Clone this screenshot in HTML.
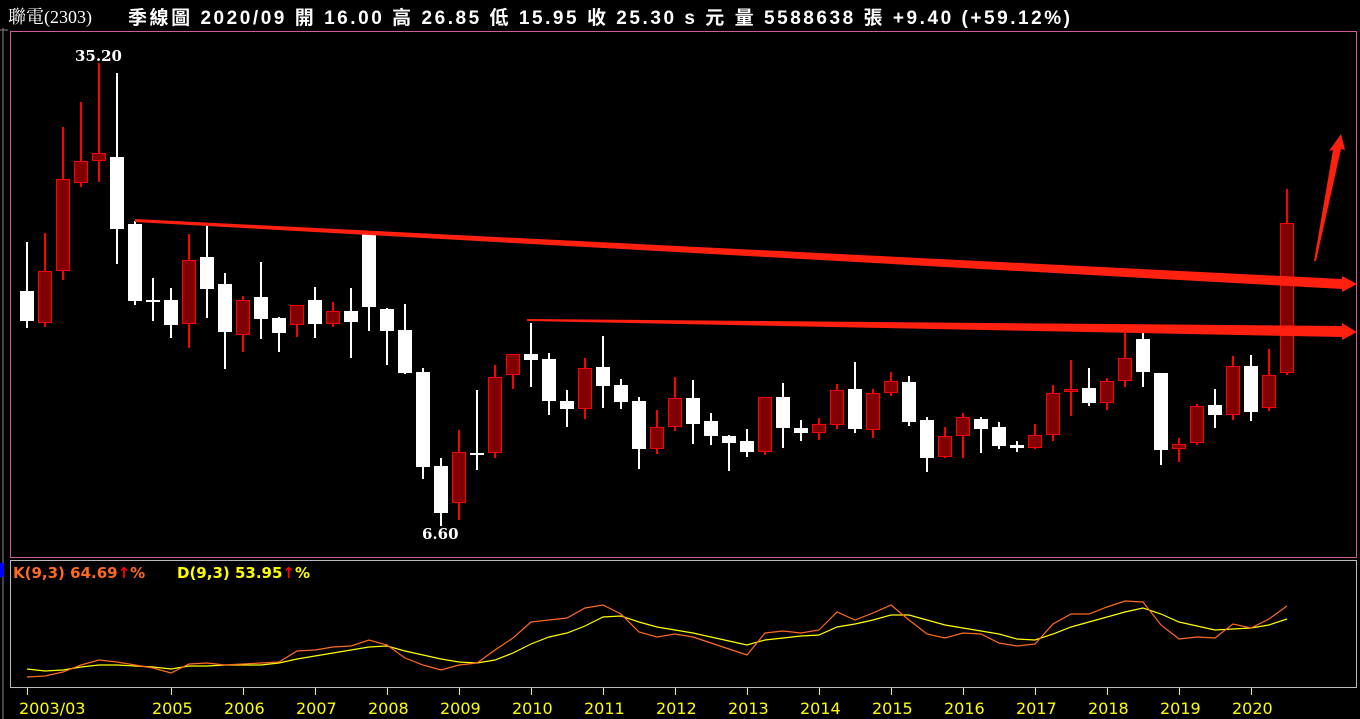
<!DOCTYPE html>
<html><head><meta charset="utf-8"><style>
html,body{margin:0;padding:0;background:#000;width:1360px;height:719px;overflow:hidden}
svg{position:absolute;left:0;top:0}
</style></head><body>
<svg id="s" width="1360" height="719" xmlns="http://www.w3.org/2000/svg">
<rect width="1360" height="719" fill="#000"/>
<text x="8" y="23" fill="#fff" font-family="Liberation Serif,'Noto Serif CJK SC',serif" font-size="18">聯電(2303)</text>
<text x="128" y="24" fill="#fff" font-family="'Liberation Sans','Noto Sans CJK TC',sans-serif" font-size="19" font-weight="bold" textLength="942" lengthAdjust="spacing">季線圖  2020/09  開 16.00  高 26.85  低 15.95  收 25.30 s 元  量 5588638 張  +9.40 (+59.12%)</text>
<line x1="3" y1="28" x2="3" y2="719" stroke="#888" stroke-width="1"/>
<line x1="0" y1="30" x2="8" y2="30" stroke="#888"/>
<rect x="10.5" y="31.5" width="1346" height="526" fill="none" stroke="#d05a9a" stroke-width="1"/>
<rect x="10.5" y="560.5" width="1346" height="127" fill="none" stroke="#bbb" stroke-width="1"/>
<rect x="0" y="563" width="4" height="14" fill="#00f"/>
<text x="75" y="61" fill="#fff" font-family="'DejaVu Serif',serif" font-weight="bold" font-size="15">35.20</text>
<text x="422" y="539" fill="#fff" font-family="'DejaVu Serif',serif" font-weight="bold" font-size="15">6.60</text>
<text x="13" y="578" fill="#ff6a20" font-family="'DejaVu Sans',sans-serif" font-weight="bold" font-size="15">K(9,3) 64.69<tspan fill="#f00">↑</tspan>%</text>
<text x="177" y="578" fill="#ffff00" font-family="'DejaVu Sans',sans-serif" font-weight="bold" font-size="15">D(9,3) 53.95<tspan fill="#f00">↑</tspan>%</text>
<g id="c"></g>
<g id="ax" font-family="'DejaVu Sans',sans-serif" font-size="16" fill="#ffff00"></g>
<polygon points="135,219 1342,279 1342,276 1357,284 1342,292 1342,289 135,222" fill="#ff2010"/>
<polygon points="527,319 1342,326 1342,323 1357,332 1342,340 1342,337 527,321" fill="#ff2010"/>
<polygon points="1314,261 1333,150 1329,151 1341,134 1345,150 1341,149 1316,261" fill="#ff2010"/>
</svg>
<script>
var d=[
[27,'W',242,291,321,328],[45,'R',233,271,323,327],[63,'R',127,179,271,280],[81,'R',102,161,183,187],[99,'R',63,153,161,182],
[117,'W',73,157,229,264],[135,'W',221,224,301,305],[153,'W',278,300,301,321],[171,'W',288,300,325,338],[189,'R',234,260,324,348],
[207,'W',225,257,289,318],[225,'W',273,284,332,369],[243,'R',296,300,335,352],[261,'W',262,297,319,339],[279,'W',317,318,333,352],
[297,'R',305,305,325,337],[315,'W',287,300,324,338],[333,'R',302,311,324,327],[351,'W',288,311,322,358],[369,'W',232,233,307,331],
[387,'W',308,309,331,365],[405,'W',304,330,373,374],[423,'W',368,372,467,479],[441,'W',458,466,513,526],[459,'R',430,452,503,520],
[477,'W',390,453,455,470],[495,'R',365,377,453,458],[513,'R',354,354,375,389],[531,'W',323,354,360,387],[549,'W',353,359,401,415],
[567,'W',390,401,409,427],[585,'R',358,368,409,419],[603,'W',336,367,386,408],[621,'W',379,385,402,409],[639,'W',397,401,449,469],
[657,'R',410,427,449,454],[675,'R',377,398,427,431],[693,'W',380,398,424,444],[711,'W',413,421,436,445],[729,'W',435,436,443,471],
[747,'W',429,441,452,457],[765,'R',397,397,452,455],[783,'W',383,397,428,448],[801,'W',420,428,433,441],[819,'R',418,424,433,440],
[837,'R',384,390,425,429],[855,'W',362,389,429,433],[873,'R',389,393,430,438],[891,'R',372,381,393,396],[909,'W',376,382,422,426],
[927,'W',417,420,458,472],[945,'R',427,436,457,458],[963,'R',413,417,436,458],[981,'W',417,419,429,453],[999,'W',422,427,446,449],
[1017,'W',441,445,448,452],[1035,'R',424,435,448,449],[1053,'R',385,393,435,441],[1071,'R',360,389,392,416],[1089,'W',368,388,403,406],
[1107,'R',378,381,403,410],[1125,'R',332,358,381,387],[1143,'W',332,339,372,387],[1161,'W',373,373,450,465],[1179,'R',438,444,449,462],
[1197,'R',404,406,443,445],[1215,'W',389,405,415,428],[1233,'R',356,366,415,420],[1251,'W',355,366,412,421],[1269,'R',349,375,408,411],
[1287,'R',189,223,373,375]];
var h='';
d.forEach(function(c){var x=c[0],col=c[1]=='R'?'#ff0000':'#ffffff';
h+='<rect x="'+(x-1)+'" y="'+c[2]+'" width="2" height="'+(c[5]-c[2])+'" fill="'+col+'"/>';
var bh=Math.max(c[4]-c[3],2);
if(c[1]=='R')h+='<rect x="'+(x-6.5)+'" y="'+(c[3]+.5)+'" width="13" height="'+(bh-1)+'" fill="#800000" stroke="#ff0000" stroke-width="1"/>';
else h+='<rect x="'+(x-7)+'" y="'+c[3]+'" width="14" height="'+bh+'" fill="#fff"/>';});
var K=[677,676,672,665,660,662,665,668,673,664,663,665,664,663,662,651,650,647,646,640,645,658,665,670,665,663,650,638,622,620,618,608,605,614,632,637,634,637,643,649,655,633,631,633,630,612,620,613,605,620,634,638,633,634,643,646,644,624,614,614,607,601,602,625,639,637,638,624,628,619,606];
var D=[669,671,670,667,665,665,666,667,669,666,666,665,665,665,663,659,656,653,650,647,646,651,655,659,662,663,660,653,644,637,633,626,617,616,622,627,630,633,637,641,645,640,638,636,635,627,624,620,615,615,620,625,628,631,634,639,640,634,627,622,617,612,608,614,622,626,630,629,628,625,619];
function pl(a,c){return '<polyline fill="none" stroke="'+c+'" stroke-width="1.2" points="'+a.map(function(y,i){return (27+18*i)+','+y}).join(' ')+'"/>';}
h+=pl(D,'#ffff00')+pl(K,'#ff6a20');
document.getElementById('c').innerHTML=h;
var yrs=[['2003/03',27],['2005',171],['2006',243],['2007',315],['2008',387],['2009',459],['2010',531],['2011',603],['2012',675],['2013',747],['2014',819],['2015',891],['2016',963],['2017',1035],['2018',1107],['2019',1179],['2020',1251]];
var a='';yrs.forEach(function(y){a+='<rect x="'+y[1]+'" y="688" width="1" height="7" fill="#ffff00"/><text x="'+(y[0].length>4?y[1]-8:y[1]-19)+'" y="714">'+y[0]+'</text>';});
document.getElementById('ax').innerHTML=a;
</script>
</body></html>
